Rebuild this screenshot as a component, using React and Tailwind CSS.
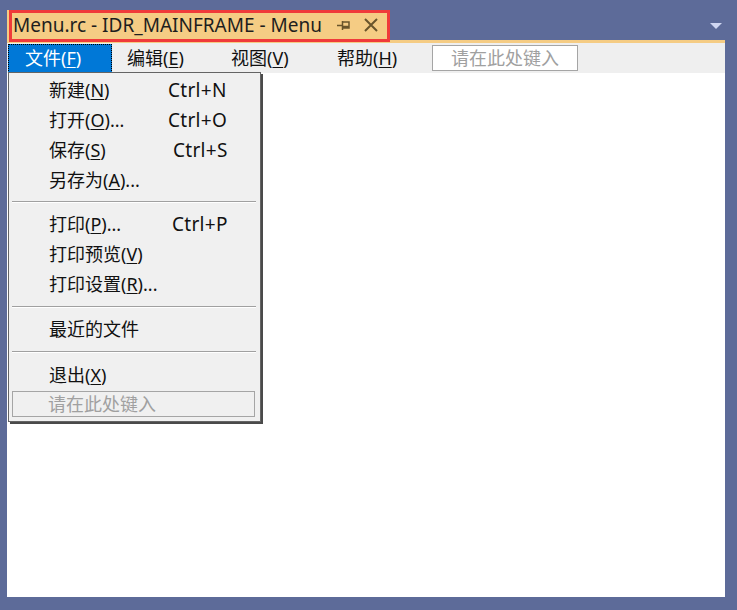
import React from "react";

const font = { fontFamily: '"Noto Sans", "Noto Sans CJK SC", sans-serif' };

function Key({ label, k, tail = "" }) {
  return (
    <span>
      {label}(<span className="underline underline-offset-2">{k}</span>){tail}
    </span>
  );
}

function Item({ children, shortcut }) {
  return (
    <div className="relative h-[30px] flex items-center pl-[40px]">
      {children}
      {shortcut && <span className="absolute left-[159px] text-[19px] tracking-[0.3px]">{shortcut}</span>}
    </div>
  );
}

function Sep({ pad = "py-[6px]" }) {
  return (
    <div className={`${pad} pl-[3px] pr-[4px]`}>
      <div className="h-px bg-[#a0a0a0]" />
      <div className="h-px bg-white" />
    </div>
  );
}

function FileMenu() {
  return (
    <div className="absolute left-[8px] top-[72px] w-[253px] h-[350px] bg-[#f0f0f0] border border-[#646464] shadow-[2px_2px_0_#4a4a4a] text-[18px] text-[#111] pt-[2px]">
      <Item shortcut="Ctrl+N"><Key label="新建" k="N" /></Item>
      <Item shortcut="Ctrl+O"><Key label="打开" k="O" tail="..." /></Item>
      <Item shortcut={<span className="ml-[5px]">Ctrl+S</span>}><Key label="保存" k="S" /></Item>
      <Item><Key label="另存为" k="A" tail="..." /></Item>
      <Sep pad="py-[6px]" />
      <Item shortcut={<span className="ml-[4px]">Ctrl+P</span>}><Key label="打印" k="P" tail="..." /></Item>
      <Item><Key label="打印预览" k="V" /></Item>
      <Item><Key label="打印设置" k="R" tail="..." /></Item>
      <Sep pad="pt-[7px] pb-[6px]" />
      <Item>最近的文件</Item>
      <Sep pad="py-[7px]" />
      <Item><Key label="退出" k="X" /></Item>
      <div className="mt-[1px] ml-[3px] mr-[5px] h-[26px] border border-[#a5a5a5] bg-[#f0f0f0] flex items-center pl-[35px] text-[#a0a0a0]">
        请在此处键入
      </div>
    </div>
  );
}

export default function App() {
  return (
    <div className="relative w-[737px] h-[610px] bg-[#5d6b99] pl-[7px] pr-[12px] pt-[10px] pb-[13px] flex flex-col" style={font}>
      <div className="flex items-center h-[30px]">
        <div className="h-full w-[382px] bg-[#f5cc84] flex items-center pl-[6px] text-[19px] text-[#1e1e1e]">
          <span>Menu.rc - IDR_MAINFRAME - Menu</span>
          <svg className="ml-[15px]" width="14" height="10" viewBox="0 0 14 10">
            <path d="M0 5.5H5M5.5 1V10M6 2H12V8H6M6 6.5H12" stroke="#6a552b" strokeWidth="1.5" fill="none" />
          </svg>
          <svg className="ml-[13px]" width="14" height="14" viewBox="0 0 14 14">
            <path d="M1 1L13 13M13 1L1 13" stroke="#6a552b" strokeWidth="2" />
          </svg>
        </div>
        <div className="flex-1" />
        <svg className="mr-[3px] mt-[2px]" width="12" height="6" viewBox="0 0 12 6">
          <path d="M0 0H12L6 6Z" fill="#d0d7f2" />
        </svg>
      </div>
      <div className="h-[3px] bg-[#f5cc84]" />
      <div className="h-[30px] bg-[#efefef] flex items-center text-[18px] text-[#111] relative">
        <div className="ml-[1px] w-[104px] h-[29px] bg-[#0078d7] border border-dotted border-black text-white flex items-center pl-[16px]">
          <Key label="文件" k="F" />
        </div>
        <span className="ml-[15px] w-[104px]"><Key label="编辑" k="E" /></span>
        <span className="w-[106px]"><Key label="视图" k="V" /></span>
        <span className="w-[95px]"><Key label="帮助" k="H" /></span>
        <div className="w-[146px] h-[26px] bg-white border border-[#a5a5a5] flex items-center justify-center text-[#a0a0a0]">
          请在此处键入
        </div>
      </div>
      <div className="flex-1 bg-white" />
      <div className="absolute left-[9px] top-[10px] w-[381px] h-[32px] border-[3px] border-[#f03a3a] pointer-events-none" />
      <FileMenu />
    </div>
  );
}
